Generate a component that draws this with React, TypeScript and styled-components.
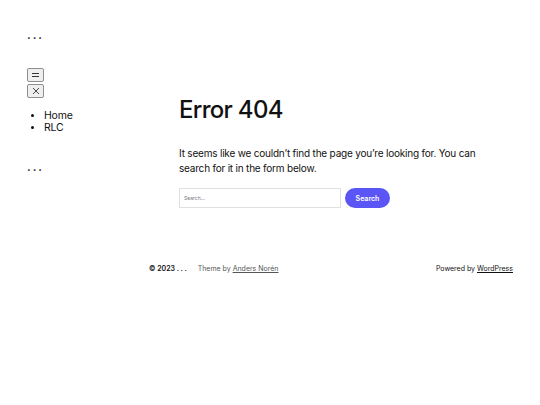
import * as React from "react";
import styled, { createGlobalStyle } from "styled-components";

const GlobalStyle = createGlobalStyle`
  html, body {
    margin: 0;
    padding: 0;
    background: #ffffff;
    color: #111111;
    font-family: Inter, "Noto Sans", sans-serif;
  }
`;

const SPage = styled.div`
  width: 540px;
  height: 405px;
  display: flex;
  flex-direction: column;
`;

const STop = styled.div`
  display: flex;
`;

const SSide = styled.div`
  width: 179px;
  padding: 30px 0 0 27px;
  box-sizing: border-box;
  display: flex;
  flex-direction: column;
  align-items: flex-start;
`;

const SDots = styled.div`
  font-size: 11px;
  font-weight: 700;
  letter-spacing: 2px;
  line-height: 10px;
  height: 10px;
`;

const SToggles = styled.div`
  margin-top: 28px;
  display: flex;
  flex-direction: column;
  gap: 2px;
`;

const SToggle = styled.button`
  width: 17px;
  height: 14px;
  padding: 0;
  margin: 0;
  border: 1px solid #8f8f8f;
  border-radius: 2px;
  background: #efefef;
  display: flex;
  align-items: center;
  justify-content: center;
`;

const SNavList = styled.ul`
  margin: 12px 0 28px;
  padding-left: 17px;
  font-size: 10.5px;
  letter-spacing: -0.2px;
  line-height: 12px;
  & li::marker {
    font-size: 9px;
  }
`;

const SMain = styled.main`
  padding-top: 95px;
  width: 300px;
`;

const STitle = styled.h1`
  margin: 0;
  font-size: 24px;
  font-weight: 500;
  letter-spacing: -0.7px;
  line-height: 30px;
`;

const SText = styled.p`
  margin: 21px 0 0;
  font-size: 10px;
  letter-spacing: -0.2px;
  line-height: 15px;
`;

const SForm = styled.form`
  display: flex;
  gap: 4px;
  margin-top: 12px;
`;

const SInput = styled.input`
  width: 162px;
  height: 20px;
  box-sizing: border-box;
  border: 1px solid #e0e0e0;
  font-family: inherit;
  font-size: 5px;
  padding: 0 4px;
  &::placeholder {
    color: #777;
  }
`;

const SButton = styled.button`
  width: 45px;
  height: 20px;
  border: none;
  border-radius: 10px;
  background: #5b55f6;
  color: #fff;
  font-family: inherit;
  font-size: 7px;
  font-weight: 600;
  padding: 0;
`;

const SFooter = styled.footer`
  margin: 56px 27px 0 149px;
  display: flex;
  align-items: center;
  font-size: 7px;
`;

const SCopy = styled.span`
  font-weight: 600;
  margin-right: 11px;
`;

const SCredit = styled.span`
  color: #555;
  & a {
    color: #555;
  }
`;

const SPowered = styled.span`
  margin-left: auto;
  & a {
    color: #111;
  }
`;

const MenuIcon = () => (
  <svg width="9" height="6" viewBox="0 0 9 6">
    <path d="M1 1.5h7M1 4.5h7" stroke="#333" strokeWidth="1" />
  </svg>
);

const CloseIcon = () => (
  <svg width="8" height="8" viewBox="0 0 8 8">
    <path d="M1 1l6 6M7 1L1 7" stroke="#333" strokeWidth="0.9" />
  </svg>
);

export default function App() {
  return (
    <SPage>
      <GlobalStyle />
      <STop>
        <SSide>
          <SDots>...</SDots>
          <SToggles>
            <SToggle aria-label="Open menu">
              <MenuIcon />
            </SToggle>
            <SToggle aria-label="Close menu">
              <CloseIcon />
            </SToggle>
          </SToggles>
          <SNavList>
            <li>Home</li>
            <li>RLC</li>
          </SNavList>
          <SDots>...</SDots>
        </SSide>
        <SMain>
          <STitle>Error 404</STitle>
          <SText>
            It seems like we couldn’t find the page you’re looking for. You can
            search for it in the form below.
          </SText>
          <SForm onSubmit={(e) => e.preventDefault()}>
            <SInput placeholder="Search..." />
            <SButton type="submit">Search</SButton>
          </SForm>
        </SMain>
      </STop>
      <SFooter>
        <SCopy>© 2023 . . .</SCopy>
        <SCredit>
          Theme by <a href="#">Anders Norén</a>
        </SCredit>
        <SPowered>
          Powered by <a href="#">WordPress</a>
        </SPowered>
      </SFooter>
    </SPage>
  );
}
